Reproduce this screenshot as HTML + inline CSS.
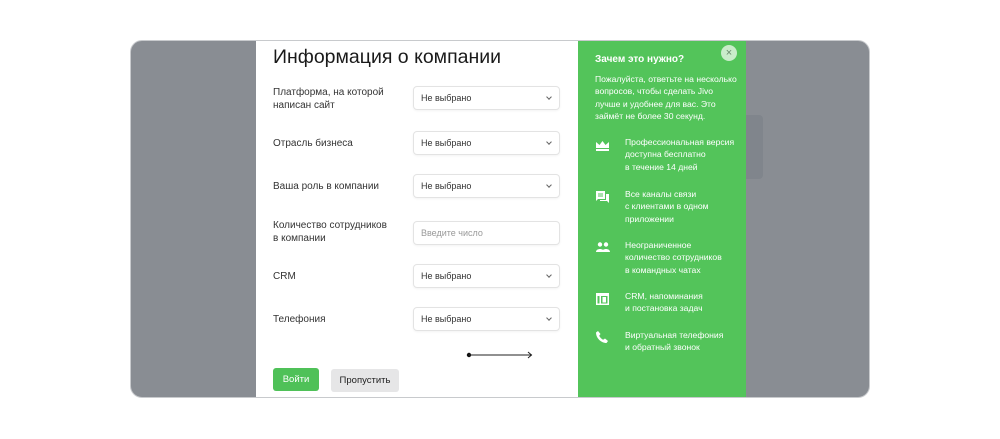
<!DOCTYPE html>
<html><head><meta charset="utf-8"><style>
*{box-sizing:border-box;margin:0;padding:0}
body{width:1000px;height:439px;background:#fff;position:relative;overflow:hidden;font-family:"Liberation Sans","DejaVu Sans",sans-serif}
.frame{position:absolute;left:130px;top:40px;width:740px;height:358px;border-radius:12px;background:#898d93;border:1px solid #c8cacd;overflow:hidden}
.white{position:absolute;left:125px;top:0;width:322px;height:358px;background:#fff}
.green{position:absolute;left:447px;top:0;width:168px;height:358px;background:#53c45a;color:#fff}
.dark{position:absolute;left:615px;top:74px;width:17px;height:64px;background:#80858c;border-radius:0 4px 4px 0}
h1{position:absolute;left:17px;top:5px;font-size:19.5px;font-weight:normal;color:#1a1a1a}
.lbl{position:absolute;left:17px;font-size:10px;color:#333;line-height:13px}
.sel{position:absolute;left:157px;width:147px;height:24px;border:1px solid #e3e3e3;border-radius:4px;font-size:9px;color:#333;padding:0 7px;line-height:22px;box-shadow:0 1px 2px rgba(0,0,0,.05)}
.sel:after{content:"";position:absolute;right:8px;top:8px;width:3px;height:3px;border-right:1px solid #666;border-bottom:1px solid #666;transform:rotate(45deg)}
.sel.in{color:#999}.sel.in:after{display:none}
.btn{position:absolute;top:327px;height:23px;border-radius:3px;font-size:9.5px;text-align:center;line-height:23px}
.gt{position:absolute;left:17px;font-size:10px;font-weight:bold}
.p{position:absolute;left:17px;top:32px;font-size:8.6px;line-height:12.3px;white-space:nowrap}
.it{position:absolute;left:47px;font-size:8.6px;line-height:12.3px}
.ic{position:absolute;left:18px}
</style></head><body>
<div class="frame">
<div class="dark"></div>
<div class="white">
<h1>Информация о компании</h1>
<div class="lbl" style="top:45px">Платформа, на которой<br>написан сайт</div>
<div class="sel" style="top:45px">Не выбрано</div>
<div class="lbl" style="top:96px">Отрасль бизнеса</div>
<div class="sel" style="top:90px">Не выбрано</div>
<div class="lbl" style="top:139px">Ваша роль в компании</div>
<div class="sel" style="top:133px">Не выбрано</div>
<div class="lbl" style="top:178px">Количество сотрудников<br>в компании</div>
<div class="sel in" style="top:180px">Введите число</div>
<div class="lbl" style="top:229px">CRM</div>
<div class="sel" style="top:223px">Не выбрано</div>
<div class="lbl" style="top:272px">Телефония</div>
<div class="sel" style="top:266px">Не выбрано</div>
<svg style="position:absolute;left:209px;top:309px" width="70" height="10"><circle cx="4" cy="5" r="2.2" fill="#111"/><line x1="4" y1="5" x2="67" y2="5" stroke="#222" stroke-width="1"/><path d="M63 2l3.5 3-3.5 3" fill="none" stroke="#222" stroke-width="1"/></svg>
<div class="btn" style="left:17px;width:46px;background:#4fc158;color:#fff">Войти</div>
<div class="btn" style="left:75px;width:68px;background:#e6e6e7;color:#222;top:328px">Пропустить</div>
</div>
<div class="green">
<div style="position:absolute;left:143px;top:4px;width:16px;height:16px;border-radius:50%;background:#c9ecca;color:#6a8a6c;font-size:11px;text-align:center;line-height:16px">×</div>
<div class="gt" style="top:13px">Зачем это нужно?</div>
<div class="p">Пожалуйста, ответьте на несколько<br>вопросов, чтобы сделать Jivo<br>лучше и удобнее для вас. Это<br>займёт не более 30 секунд.</div>
<svg class="ic" style="top:100px" width="13" height="10"><path d="M0 1l3.5 3L6.5 0l3 4L13 1v6H0z M0 8h13v2H0z" fill="#fff"/></svg>
<div class="it" style="top:95px">Профессиональная версия<br>доступна бесплатно<br>в течение 14 дней</div>
<svg class="ic" style="top:150px" width="13" height="12"><path d="M0 0h9v8H2L0 10z M10 3h3v9l-2-2H4V9h6z" fill="#fff"/><path d="M2 3h5M2 5h5" stroke="#53c45a" stroke-width="1"/></svg>
<div class="it" style="top:147px">Все каналы связи<br>с клиентами в одном<br>приложении</div>
<svg class="ic" style="top:201px" width="14" height="10"><circle cx="4" cy="2.5" r="2.2" fill="#fff"/><circle cx="10" cy="2.5" r="2.2" fill="#fff"/><path d="M0 10c0-4 8-4 8 0z M6 10c0-4 8-4 8 0z" fill="#fff"/></svg>
<div class="it" style="top:198px">Неограниченное<br>количество сотрудников<br>в командных чатах</div>
<svg class="ic" style="top:252px" width="13" height="12"><rect x="0" y="0" width="13" height="12" fill="#fff"/><rect x="1.5" y="3" width="2" height="7.5" fill="#53c45a"/><rect x="5" y="3" width="6.5" height="7.5" fill="#53c45a"/><rect x="6.5" y="4" width="3.5" height="5.5" fill="#fff"/></svg>
<div class="it" style="top:249px">CRM, напоминания<br>и постановка задач</div>
<svg class="ic" style="top:290px" width="12" height="12"><path d="M2 0l2.5 3-1.3 1.8c.8 1.7 2.2 3.1 3.9 3.9L9 7.5l3 2.5-1.5 2C5 12 0 7 0 1.5z" fill="#fff"/></svg>
<div class="it" style="top:288px">Виртуальная телефония<br>и обратный звонок</div>
</div>
</div>
</body></html>
